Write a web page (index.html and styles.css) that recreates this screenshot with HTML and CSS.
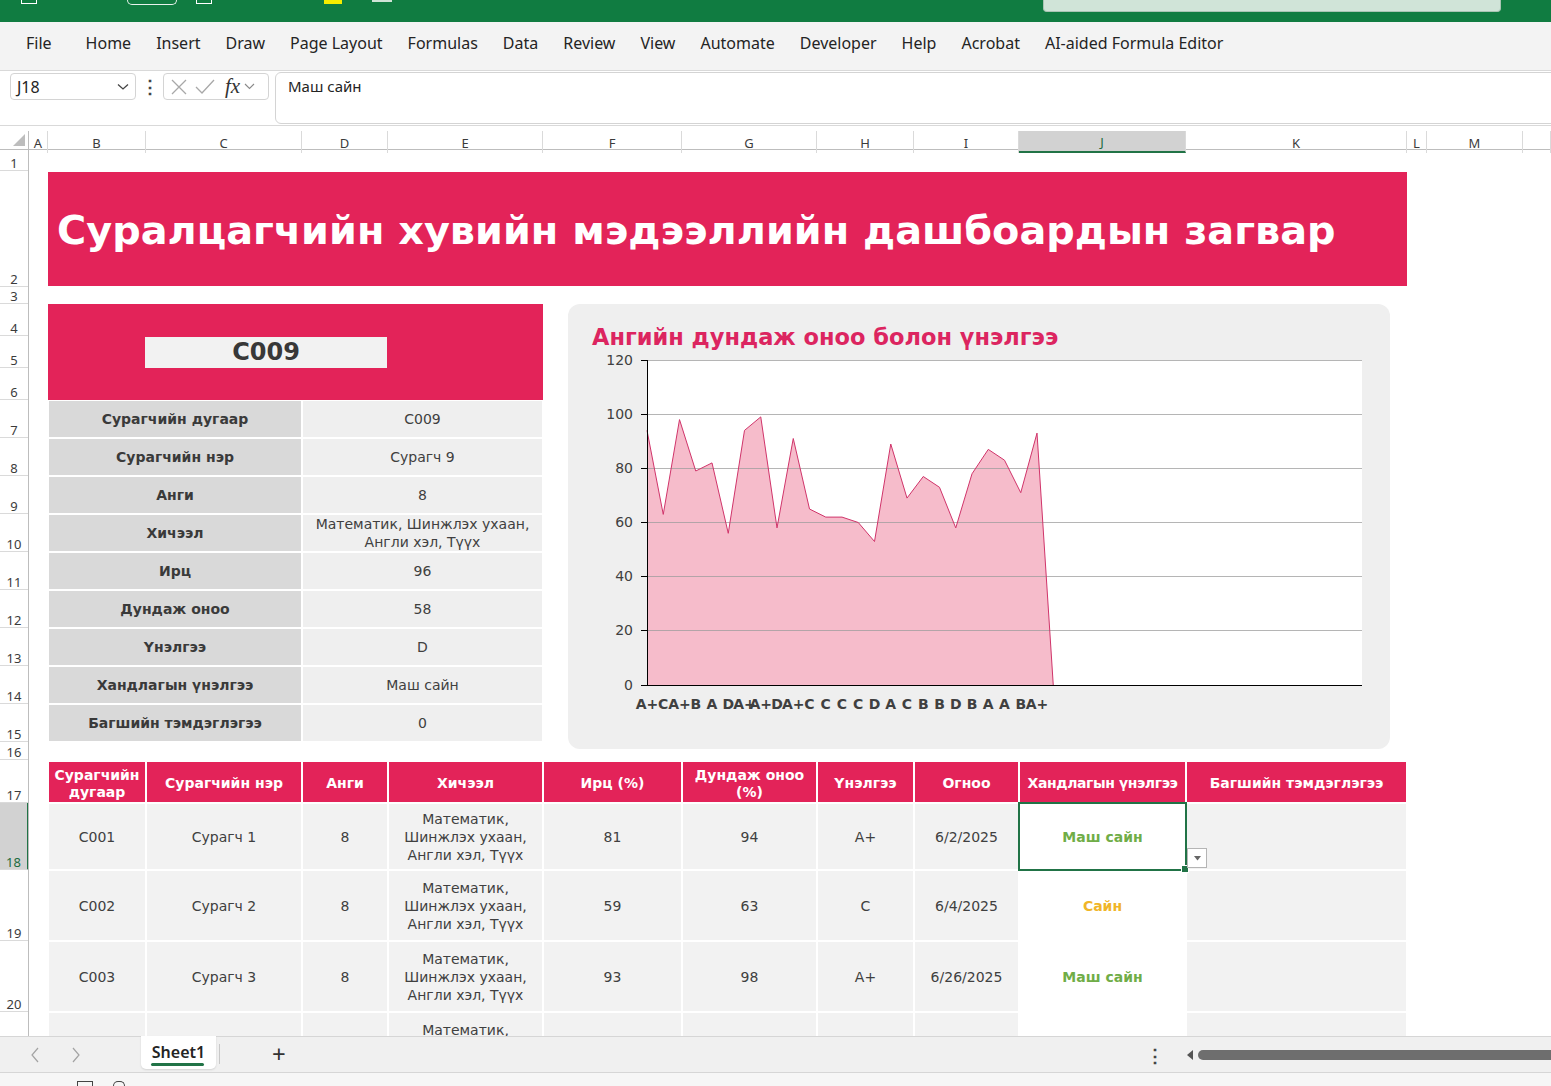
FILE: index.html
```html
<!DOCTYPE html>
<html lang="mn">
<head>
  <meta charset="UTF-8">
  <title>Сурагчийн дашбоард - Excel</title>
  <link rel="stylesheet" href="styles.css">
</head>
<body>
  <!-- window title bar (cut off at top of the screenshot) -->
  <div class="titlebar">
    <span class="tb-icon"></span>
    <span class="tb-toggle"></span>
    <span class="tb-icon tb-save"></span>
    <span class="tb-mark"></span>
    <span class="tb-line"></span>
    <div class="tb-search"></div>
  </div>

  <div class="tabs">
    <ul>
      <li>File</li>
      <li>Home</li>
      <li>Insert</li>
      <li>Draw</li>
      <li>Page Layout</li>
      <li>Formulas</li>
      <li>Data</li>
      <li>Review</li>
      <li>View</li>
      <li>Automate</li>
      <li>Developer</li>
      <li>Help</li>
      <li>Acrobat</li>
      <li>AI-aided Formula Editor</li>
    </ul>
  </div>

  <div class="formula-row">
    <div class="namebox">
      <span>J18</span>
      <svg width="12" height="8" viewBox="0 0 12 8"><path d="M1 1.5 L6 6 L11 1.5" fill="none" stroke="#444" stroke-width="1.3"/></svg>
    </div>
    <div class="more-dots">⋮</div>
    <div class="fx-box">
      <svg width="18" height="18" viewBox="0 0 18 18"><path d="M2 2 L16 16 M16 2 L2 16" stroke="#a8a8a8" stroke-width="1.3"/></svg>
      <svg width="20" height="18" viewBox="0 0 20 18"><path d="M1 9 L7 15 L19 2" fill="none" stroke="#a8a8a8" stroke-width="1.3"/></svg>
      <span class="fx">fx</span>
      <svg width="11" height="7" viewBox="0 0 11 7"><path d="M1 1 L5.5 5.5 L10 1" fill="none" stroke="#8a8a8a" stroke-width="1.1"/></svg>
    </div>
    <div class="formula-input">Маш сайн</div>
  </div>

  <div class="sheet">
    <div class="corner">
      <svg width="12" height="12" viewBox="0 0 12 12"><path d="M12 0 L12 12 L0 12 Z" fill="#bdbdbd"/></svg>
    </div>

    <div class="col-head">
      <div>A</div><div>B</div><div>C</div><div>D</div><div>E</div>
      <div>F</div><div>G</div><div>H</div><div>I</div>
      <div class="active">J</div>
      <div>K</div><div>L</div><div>M</div><div></div>
    </div>

    <div class="row-head">
      <div>1</div><div>2</div><div>3</div><div>4</div><div>5</div><div>6</div><div>7</div>
      <div>8</div><div>9</div><div>10</div><div>11</div><div>12</div><div>13</div><div>14</div>
      <div>15</div><div>16</div><div>17</div><div class="active">18</div><div>19</div><div>20</div><div>21</div>
    </div>

    <div class="canvas">
      <div class="banner">
        <h1>Суралцагчийн хувийн мэдээллийн дашбоардын загвар</h1>
      </div>

      <div class="id-box">
        <div class="id-value">C009</div>
      </div>

      <div class="info">
        <div class="label">Сурагчийн дугаар</div><div class="value">C009</div>
        <div class="label">Сурагчийн нэр</div><div class="value">Сурагч 9</div>
        <div class="label">Анги</div><div class="value">8</div>
        <div class="label">Хичээл</div><div class="value">Математик, Шинжлэх ухаан,<br>Англи хэл, Түүх</div>
        <div class="label">Ирц</div><div class="value">96</div>
        <div class="label">Дундаж оноо</div><div class="value">58</div>
        <div class="label">Үнэлгээ</div><div class="value">D</div>
        <div class="label">Хандлагын үнэлгээ</div><div class="value">Маш сайн</div>
        <div class="label">Багшийн тэмдэглэгээ</div><div class="value">0</div>
      </div>

      <div class="chart-panel">
        <h2>Ангийн дундаж оноо болон үнэлгээ</h2>
        <svg class="chart" width="822" height="399" viewBox="0 0 822 399">
          <rect x="79" y="10" width="715" height="325" fill="#fff"/>
          <polygon fill="#f6bccb" points="79,335 79,80.4 95.25,164.4 111.5,69.6 127.75,121 144,112.9 160.25,183.3 176.5,80.4 192.75,66.9 209,177.9 225.25,88.5 241.5,159 257.75,167.1 274,167.1 290.25,172.5 306.5,191.5 322.75,94 339,148.1 355.25,126.5 371.5,137.3 387.75,177.9 404,123.8 420.25,99.4 436.5,110.2 452.75,142.7 469,83.1 485.25,335"/>
          <g stroke="#9c9c9c" stroke-opacity="0.75">
            <line x1="79" y1="10.5" x2="794" y2="10.5"/>
            <line x1="79" y1="64.5" x2="794" y2="64.5"/>
            <line x1="79" y1="118.5" x2="794" y2="118.5"/>
            <line x1="79" y1="172.5" x2="794" y2="172.5"/>
            <line x1="79" y1="226.5" x2="794" y2="226.5"/>
            <line x1="79" y1="280.5" x2="794" y2="280.5"/>
          </g>
          <polyline fill="none" stroke="#d0346a" stroke-width="1" points="79,80.4 95.25,164.4 111.5,69.6 127.75,121 144,112.9 160.25,183.3 176.5,80.4 192.75,66.9 209,177.9 225.25,88.5 241.5,159 257.75,167.1 274,167.1 290.25,172.5 306.5,191.5 322.75,94 339,148.1 355.25,126.5 371.5,137.3 387.75,177.9 404,123.8 420.25,99.4 436.5,110.2 452.75,142.7 469,83.1 485.25,335"/>
          <g stroke="#000" stroke-width="1">
            <line x1="79.5" y1="10" x2="79.5" y2="335"/>
            <line x1="79" y1="335.5" x2="794" y2="335.5"/>
            <line x1="73" y1="10.5" x2="79" y2="10.5"/>
            <line x1="73" y1="64.5" x2="79" y2="64.5"/>
            <line x1="73" y1="118.5" x2="79" y2="118.5"/>
            <line x1="73" y1="172.5" x2="79" y2="172.5"/>
            <line x1="73" y1="226.5" x2="79" y2="226.5"/>
            <line x1="73" y1="280.5" x2="79" y2="280.5"/>
            <line x1="73" y1="335.5" x2="79" y2="335.5"/>
          </g>
          <g class="y-labels" text-anchor="end">
            <text x="65" y="15">120</text>
            <text x="65" y="69">100</text>
            <text x="65" y="123">80</text>
            <text x="65" y="177">60</text>
            <text x="65" y="231">40</text>
            <text x="65" y="285">20</text>
            <text x="65" y="340">0</text>
          </g>
          <g class="x-labels" text-anchor="middle">
            <text x="79" y="359">A+</text>
            <text x="95.25" y="359">C</text>
            <text x="111.5" y="359">A+</text>
            <text x="127.75" y="359">B</text>
            <text x="144" y="359">A</text>
            <text x="160.25" y="359">D</text>
            <text x="176.5" y="359">A+</text>
            <text x="192.75" y="359">A+</text>
            <text x="209" y="359">D</text>
            <text x="225.25" y="359">A+</text>
            <text x="241.5" y="359">C</text>
            <text x="257.75" y="359">C</text>
            <text x="274" y="359">C</text>
            <text x="290.25" y="359">C</text>
            <text x="306.5" y="359">D</text>
            <text x="322.75" y="359">A</text>
            <text x="339" y="359">C</text>
            <text x="355.25" y="359">B</text>
            <text x="371.5" y="359">B</text>
            <text x="387.75" y="359">D</text>
            <text x="404" y="359">B</text>
            <text x="420.25" y="359">A</text>
            <text x="436.5" y="359">A</text>
            <text x="452.75" y="359">B</text>
            <text x="469" y="359">A+</text>
          </g>
        </svg>
      </div>

      <div class="data-table">
        <div class="th">Сурагчийн дугаар</div>
        <div class="th">Сурагчийн нэр</div>
        <div class="th">Анги</div>
        <div class="th">Хичээл</div>
        <div class="th">Ирц (%)</div>
        <div class="th">Дундаж оноо (%)</div>
        <div class="th">Үнэлгээ</div>
        <div class="th">Огноо</div>
        <div class="th nowrap">Хандлагын үнэлгээ</div>
        <div class="th">Багшийн тэмдэглэгээ</div>

        <div>C001</div>
        <div>Сурагч 1</div>
        <div>8</div>
        <div>Математик, Шинжлэх ухаан, Англи хэл, Түүх</div>
        <div>81</div>
        <div>94</div>
        <div>A+</div>
        <div>6/2/2025</div>
        <div class="attitude great selected">Маш сайн<span class="dropdown"><svg width="7" height="5" viewBox="0 0 7 5"><path d="M0 0 L7 0 L3.5 4.5 Z" fill="#666"/></svg></span></div>
        <div></div>

        <div>C002</div>
        <div>Сурагч 2</div>
        <div>8</div>
        <div>Математик, Шинжлэх ухаан, Англи хэл, Түүх</div>
        <div>59</div>
        <div>63</div>
        <div>C</div>
        <div>6/4/2025</div>
        <div class="attitude good">Сайн</div>
        <div></div>

        <div>C003</div>
        <div>Сурагч 3</div>
        <div>8</div>
        <div>Математик, Шинжлэх ухаан, Англи хэл, Түүх</div>
        <div>93</div>
        <div>98</div>
        <div>A+</div>
        <div>6/26/2025</div>
        <div class="attitude great">Маш сайн</div>
        <div></div>

        <div>C004</div>
        <div>Сурагч 4</div>
        <div>8</div>
        <div>Математик, Шинжлэх ухаан, Англи хэл, Түүх</div>
        <div>88</div>
        <div>79</div>
        <div>B</div>
        <div>6/9/2025</div>
        <div class="attitude good">Сайн</div>
        <div></div>
      </div>
    </div>
  </div>

  <div class="sheet-tabs">
    <svg class="nav" width="10" height="16" viewBox="0 0 10 16"><path d="M8 1 L2 8 L8 15" fill="none" stroke="#a3a3a3" stroke-width="1.2"/></svg>
    <svg class="nav" width="10" height="16" viewBox="0 0 10 16"><path d="M2 1 L8 8 L2 15" fill="none" stroke="#a3a3a3" stroke-width="1.2"/></svg>
    <div class="sheet-tab">Sheet1</div>
    <span class="tab-sep"></span>
    <span class="add-sheet">+</span>
    <span class="spacer"></span>
    <span class="tab-dots">⋮</span>
    <svg class="scroll-left" width="8" height="10" viewBox="0 0 8 10"><path d="M7 0 L7 10 L1 5 Z" fill="#555"/></svg>
    <div class="scroll-thumb"></div>
  </div>

  <div class="statusbar">
    <span class="sb-icon"></span>
    <span class="sb-icon sb-two"></span>
  </div>
</body>
</html>
```

FILE: styles.css
```css
* {
  margin: 0;
  padding: 0;
  box-sizing: border-box;
}

body {
  width: 1551px;
  height: 1086px;
  overflow: hidden;
  background: #fff;
  color: #242424;
  font-family: "Noto Sans", "Open Sans", sans-serif;
}

/* title bar */
.titlebar {
  height: 22px;
  background: #107c41;
  display: flex;
  align-items: flex-start;
}

.tb-icon {
  width: 16px;
  height: 4px;
  margin-left: 21px;
  border: 1.5px solid #fff;
  border-top: none;
}

.tb-toggle {
  width: 50px;
  height: 5px;
  margin-left: 90px;
  border: 1.5px solid #e8f2ec;
  border-top: none;
  border-radius: 0 0 6px 6px;
}

.tb-save {
  margin-left: 19px;
}

.tb-mark {
  width: 18px;
  height: 4px;
  margin-left: 112px;
  background: #f5ec00;
}

.tb-line {
  width: 20px;
  height: 2px;
  margin-left: 30px;
  background: #cfe3d6;
}

.tb-search {
  width: 458px;
  height: 12px;
  margin-left: 651px;
  background: #d0e4d8;
  border: 1px solid #a9c4b3;
  border-top: none;
  border-radius: 0 0 4px 4px;
}

/* ribbon tabs */
.tabs {
  height: 49px;
  background: #f3f3f3;
  border-bottom: 1px solid #d9d9d9;
  display: flex;
  align-items: center;
  padding: 0 0 6px 26px;
}

.tabs ul {
  display: flex;
  list-style: none;
  gap: 25px;
  font-size: 16px;
}

.tabs li:first-child {
  margin-right: 9px;
}

/* formula bar */
.formula-row {
  height: 55px;
  border-bottom: 1px solid #d9d9d9;
  display: flex;
  align-items: flex-start;
  padding: 1px 0 0 10px;
}

.namebox {
  width: 126px;
  height: 27px;
  margin-top: 1px;
  border: 1px solid #d4d4d4;
  border-radius: 4px;
  display: flex;
  align-items: center;
  justify-content: space-between;
  padding: 0 6px;
  font-size: 16px;
}

.more-dots {
  width: 27px;
  height: 29px;
  text-align: center;
  font-size: 18px;
  line-height: 29px;
  color: #444;
  font-weight: bold;
}

.fx-box {
  width: 106px;
  height: 27px;
  margin-top: 1px;
  border: 1px solid #d4d4d4;
  border-radius: 4px;
  display: flex;
  align-items: center;
  gap: 7px;
  padding-left: 6px;
}

.fx {
  font-family: "Liberation Serif", serif;
  font-style: italic;
  font-size: 21px;
  color: #333;
  margin-left: 3px;
  margin-right: -3px;
}

.formula-input {
  flex: 1;
  height: 52px;
  margin-left: 6px;
  margin-right: -12px;
  border: 1px solid #d4d4d4;
  border-radius: 6px;
  padding: 3px 12px;
  font-size: 15px;
}

/* sheet grid */
.sheet {
  --cols: 19px 98px 156px 86px 155px 139px 135px 97px 105px 167px 221px 20px 96px 1fr;
  --rows: 21px 116px 17px 32px 32px 32px repeat(9, 38px) 18px 43px 67px 71px 71px 71px;
  margin-top: 5px;
  height: 905px;
  display: grid;
  grid-template-columns: 29px 1fr;
  grid-template-rows: 19px minmax(0, 1fr);
  overflow: hidden;
}

.corner {
  border-right: 1px solid #bdbdbd;
  border-bottom: 1px solid #bdbdbd;
  display: flex;
  align-items: flex-end;
  justify-content: flex-end;
  padding: 0 3px 3px 0;
}

.col-head {
  display: grid;
  grid-template-columns: var(--cols);
  border-bottom: 1px solid #bdbdbd;
  font-size: 13px;
  color: #3b3b3b;
}

.col-head div {
  display: flex;
  align-items: center;
  justify-content: center;
  padding-top: 2px;
  border-right: 1px solid #dadada;
}

.col-head .active {
  background: #d2d2d2;
  color: #1d6b40;
  border-bottom: 2px solid #217346;
}

.row-head {
  display: grid;
  grid-template-rows: var(--rows);
  border-right: 1px solid #bdbdbd;
  font-size: 13px;
  color: #3b3b3b;
  overflow: hidden;
}

.row-head div {
  display: flex;
  align-items: flex-end;
  justify-content: center;
  border-bottom: 1px solid #dadada;
  line-height: 14px;
}

.row-head .active {
  background: #d2d2d2;
  color: #1d6b40;
  border-right: 2px solid #217346;
  margin-right: -1px;
}

.canvas {
  display: grid;
  grid-template-columns: var(--cols);
  grid-template-rows: var(--rows);
  overflow: hidden;
  font-family: "DejaVu Sans", Verdana, sans-serif;
  font-size: 14px;
  color: #404040;
}

/* dashboard blocks */
.banner {
  grid-column: 2 / 12;
  grid-row: 2;
  margin: 1px 0;
  background: #e32359;
  display: flex;
  align-items: center;
  padding: 2px 0 0 9px;
}

.banner h1 {
  color: #fff;
  font-size: 39.8px;
  font-weight: bold;
  white-space: nowrap;
}

.id-box {
  grid-column: 2 / 6;
  grid-row: 4 / 7;
  background: #e32359;
  display: flex;
  align-items: center;
}

.id-value {
  width: 242px;
  height: 31px;
  margin-left: 97px;
  background: #f2f2f2;
  text-align: center;
  font-size: 24px;
  font-weight: bold;
  line-height: 31px;
  color: #383838;
}

.info {
  grid-column: 2 / 6;
  grid-row: 7 / 16;
  display: grid;
  grid-template-columns: 254px 241px;
  grid-auto-rows: 38px;
}

.info div {
  border: 1px solid #fff;
  display: flex;
  align-items: center;
  justify-content: center;
  text-align: center;
  line-height: 18px;
}

.info .label {
  background: #d9d9d9;
  font-weight: bold;
  color: #3a3a3a;
}

.info .value {
  background: #efefef;
}

.chart-panel {
  grid-column: 6 / 12;
  grid-row: 4 / 17;
  margin: 0 17px 11px 25px;
  background: #efefef;
  border-radius: 12px;
}

.chart-panel h2 {
  height: 46px;
  padding: 20px 0 0 24px;
  font-size: 22.5px;
  line-height: 26px;
  font-weight: bold;
  color: #dc2560;
  white-space: nowrap;
}

.chart {
  display: block;
}

.y-labels {
  font-family: "DejaVu Sans", Verdana, sans-serif;
  font-size: 14px;
  fill: #404040;
}

.x-labels {
  font-family: "DejaVu Sans", Verdana, sans-serif;
  font-size: 14px;
  font-weight: bold;
  fill: #404040;
}

/* student table */
.data-table {
  grid-column: 2 / 12;
  grid-row: 17 / 22;
  display: grid;
  grid-template-columns: 98px 156px 86px 155px 139px 135px 97px 105px 167px 221px;
  grid-template-rows: 43px 67px 71px 71px 71px;
}

.data-table > div {
  border: 1px solid #fff;
  background: #f2f2f2;
  display: flex;
  align-items: center;
  justify-content: center;
  text-align: center;
  line-height: 18px;
  padding: 0 4px;
}

.data-table .th {
  background: #e32359;
  border-top-width: 2px;
  color: #fff;
  font-weight: bold;
  line-height: 17px;
  padding: 3px 2px 0;
}

.data-table .nowrap {
  white-space: nowrap;
  letter-spacing: -0.4px;
}

.data-table .attitude {
  background: #fff;
  font-weight: bold;
}

.great {
  color: #70ad47;
}

.good {
  color: #f0b528;
}

.data-table .selected {
  position: relative;
  outline: 2px solid #217346;
  outline-offset: -1px;
}

.selected::after {
  content: "";
  position: absolute;
  right: -4px;
  bottom: -4px;
  width: 6px;
  height: 6px;
  background: #217346;
  border: 1px solid #fff;
}

.dropdown {
  position: absolute;
  left: 167px;
  top: 44px;
  z-index: 2;
  width: 20px;
  height: 20px;
  background: #fff;
  border: 1px solid #b5b5b5;
  display: flex;
  align-items: center;
  justify-content: center;
}

/* sheet tabs + status bar */
.sheet-tabs {
  height: 36px;
  background: #f0f0f0;
  border-top: 1px solid #d6d6d6;
  display: flex;
  align-items: flex-start;
}

.nav {
  margin-top: 10px;
  margin-left: 30px;
}

.nav + .nav {
  margin-left: 31px;
}

.sheet-tab {
  width: 75px;
  height: 33px;
  margin-left: 60px;
  margin-top: -1px;
  background: #fff;
  border-radius: 0 0 5px 5px;
  box-shadow: 0 1px 2px rgba(0, 0, 0, 0.12);
  text-align: center;
  font-size: 16px;
  font-weight: 600;
  line-height: 32px;
  position: relative;
}

.sheet-tab::after {
  content: "";
  position: absolute;
  left: 10px;
  right: 12px;
  bottom: 3px;
  height: 3px;
  background: #217346;
  border-radius: 2px;
}

.tab-sep {
  width: 1px;
  height: 20px;
  margin: 7px 0 0 3px;
  background: #c8c8c8;
}

.add-sheet {
  margin-left: 52px;
  font-size: 24px;
  line-height: 34px;
  color: #333;
}

.spacer {
  flex: 1;
}

.tab-dots {
  font-size: 18px;
  font-weight: bold;
  line-height: 36px;
  color: #444;
  margin-right: 22px;
}

.scroll-left {
  margin-top: 13px;
}

.scroll-thumb {
  width: 363px;
  height: 10px;
  margin: 13px -10px 0 4px;
  background: #6e6e6e;
  border-radius: 5px;
}

.statusbar {
  height: 14px;
  background: #f6f6f6;
  border-top: 1px solid #d6d6d6;
  display: flex;
  align-items: flex-end;
}

.sb-icon {
  width: 16px;
  height: 5px;
  margin-left: 77px;
  border: 1.5px solid #444;
  border-bottom: none;
}

.sb-two {
  margin-left: 20px;
  width: 12px;
  border-radius: 6px 6px 0 0;
}
```
